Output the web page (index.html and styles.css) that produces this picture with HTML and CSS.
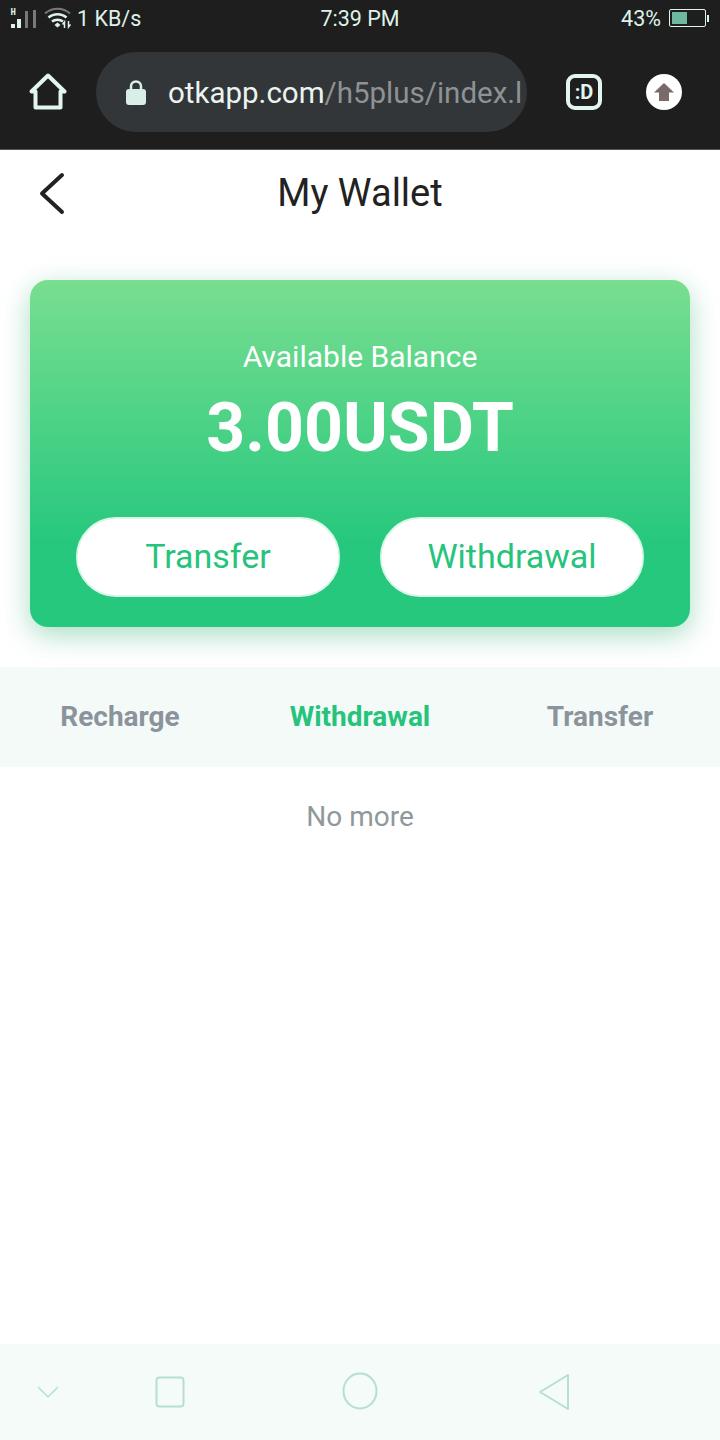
FILE: index.html
```html
<!DOCTYPE html>
<html lang="en">
<head>
  <meta charset="UTF-8">
  <title>My Wallet</title>
  <meta name="viewport" content="width=device-width, initial-scale=1">
  <link rel="stylesheet" href="styles.css">
</head>
<body>
  <div class="chrome">
    <div class="status">
      <div class="status-left">
        <svg class="signal" width="28" height="22" viewBox="0 0 28 22">
          <text x="0.500" y="8" class="signal-h">H</text>
          <rect x="1" y="17" width="4" height="4" fill="#dff2ea"/>
          <rect x="7" y="12" width="4" height="9" fill="#dff2ea"/>
          <rect x="15" y="4" width="3" height="17" fill="#77797a"/>
          <rect x="23" y="3" width="3" height="18" fill="#77797a"/>
        </svg>
        <svg class="wifi" width="28" height="22" viewBox="0 0 28 22" fill="none">
          <path d="M1 6.500C8 0 19 0 26 6.500" stroke="#77797a" stroke-width="2"/>
          <path d="M4.500 10.500C9.500 6 17.500 6 22.500 10.500" stroke="#dff2ea" stroke-width="2.500"/>
          <path d="M8 14.500C11 12 16 12 19 14.500" stroke="#dff2ea" stroke-width="2.500"/>
          <path d="M10.500 18L13.500 15.500L16.500 18L13.500 20.500Z" fill="#dff2ea"/>
          <path d="M20.500 21V15L18.500 17.500M24.500 14V20L26.500 17.500" stroke="#dff2ea" stroke-width="1.500"/>
        </svg>
        <span class="speed">1 KB/s</span>
      </div>
      <span class="clock">7:39 PM</span>
      <div class="status-right">
        <span class="percent">43%</span>
        <div class="battery"><div class="battery-fill"></div></div>
        <div class="battery-tip"></div>
      </div>
    </div>
    <div class="toolbar">
      <svg class="home" width="38" height="38" viewBox="0 0 38 38" fill="none">
        <path d="M2.500 18.500L19 2.500L35.500 18.500H31.500V34.500H6.500V18.500Z" stroke="#e3f5ef" stroke-width="4" stroke-linejoin="round"/>
      </svg>
      <div class="urlbar">
        <svg class="lock" width="20" height="27" viewBox="0 0 20 27">
          <path d="M5 11V7.500C5 4.500 7 2.500 10 2.500S15 4.500 15 7.500V11" fill="none" stroke="#d8efe7" stroke-width="2.500"/>
          <rect x="0" y="10" width="20" height="16" rx="3" fill="#d8efe7"/>
        </svg>
        <div class="url"><span class="url-host">otkapp.com</span><span class="url-path">/h5plus/index.l</span></div>
      </div>
      <div class="smile">:D</div>
      <div class="upload">
        <svg width="22" height="20" viewBox="0 0 22 20">
          <path d="M11 1L21 10.500H16V19H6V10.500H1Z" fill="#7a6a6a"/>
        </svg>
      </div>
    </div>
  </div>

  <div class="titlebar">
    <svg class="back" width="28" height="44" viewBox="0 0 28 44" fill="none">
      <path d="M24 3L4 21.500L24 40" stroke="#222" stroke-width="4" stroke-linecap="round" stroke-linejoin="round"/>
    </svg>
    <h1>My Wallet</h1>
  </div>

  <div class="card">
    <div class="card-label">Available Balance</div>
    <div class="card-amount">3.00USDT</div>
    <div class="card-buttons">
      <button class="pill">Transfer</button>
      <button class="pill">Withdrawal</button>
    </div>
  </div>

  <div class="tabs">
    <div class="tab">Recharge</div>
    <div class="tab active">Withdrawal</div>
    <div class="tab">Transfer</div>
  </div>

  <div class="nomore">No more</div>

  <div class="navbar">
    <svg class="nav-chevron" width="24" height="14" viewBox="0 0 24 14" fill="none">
      <path d="M2 2L12 12L22 2" stroke="#b5e0d4" stroke-width="1.500"/>
    </svg>
    <svg class="nav-square" width="30" height="32" viewBox="0 0 30 32" fill="none">
      <rect x="1.500" y="1.500" width="27" height="29" rx="3" stroke="#b5dfd3" stroke-width="2"/>
    </svg>
    <svg class="nav-circle" width="36" height="38" viewBox="0 0 36 38" fill="none">
      <ellipse cx="18" cy="19" rx="16.500" ry="17.500" stroke="#b5dfd3" stroke-width="2"/>
    </svg>
    <svg class="nav-back" width="32" height="38" viewBox="0 0 32 38" fill="none">
      <path d="M2 19L30 2V36Z" stroke="#b5dfd3" stroke-width="2" stroke-linejoin="round"/>
    </svg>
  </div>
</body>
</html>
```

FILE: styles.css
```css
* {
  box-sizing: border-box;
}
html, body {
  margin: 0;
  padding: 0;
}
body {
  width: 720px;
  height: 1440px;
  display: flex;
  flex-direction: column;
  font-family: Roboto, "Liberation Sans", sans-serif;
  background-color: #fff;
  overflow: hidden;
}

/* browser chrome */
.chrome {
  height: 150px;
  background-color: #1e1e1e;
  border-bottom: 1px solid #555;
  flex-shrink: 0;
}
.status {
  height: 36px;
  position: relative;
  display: flex;
  align-items: center;
  justify-content: space-between;
  padding: 0 10px;
  color: #dff2ea;
  font-size: 21.500px;
}
.status-left {
  display: flex;
  align-items: center;
  gap: 6px;
}
.signal-h {
  font-family: "DejaVu Sans Mono", monospace;
  font-size: 9px;
  font-weight: bold;
  fill: #dff2ea;
}
.speed {
  margin-left: -1px;
}
.clock {
  position: absolute;
  left: 0;
  right: 0;
  text-align: center;
  font-size: 21.500px;
}
.status-right {
  display: flex;
  align-items: center;
}
.percent {
  margin-right: 8px;
  font-size: 21.500px;
}
.battery {
  width: 37px;
  height: 18px;
  border: 1px solid #dff2ea;
  border-radius: 2px;
  padding: 2px;
}
.battery-fill {
  width: 15px;
  height: 100%;
  background-color: #6fb8a0;
}
.battery-tip {
  width: 2px;
  height: 7px;
  margin-left: 1px;
  margin-right: 1px;
  background-color: #dff2ea;
}

.toolbar {
  display: flex;
  align-items: center;
  height: 80px;
  margin-top: 16px;
}
.home {
  margin-left: 29px;
  flex-shrink: 0;
}
.urlbar {
  width: 431px;
  height: 80px;
  margin-left: 29px;
  border-radius: 40px;
  background-color: #333638;
  display: flex;
  align-items: center;
  padding: 0 0 0 30px;
  flex-shrink: 0;
}
.lock {
  flex-shrink: 0;
}
.url {
  margin-left: 22px;
  padding-top: 2px;
  font-size: 29.500px;
  white-space: nowrap;
}
.url-host {
  color: #eaf5f1;
}
.url-path {
  color: #8f9294;
}
.smile {
  width: 36px;
  height: 36px;
  margin-left: 39px;
  border: 4px solid #e3f5ef;
  border-radius: 9px;
  color: #e3f5ef;
  font-family: "Liberation Sans Narrow", Roboto, sans-serif;
  font-size: 20px;
  font-weight: bold;
  display: flex;
  align-items: center;
  justify-content: center;
  flex-shrink: 0;
}
.upload {
  width: 36px;
  height: 36px;
  margin-left: 44px;
  border-radius: 50%;
  background-color: #fff;
  display: flex;
  align-items: center;
  justify-content: center;
  flex-shrink: 0;
}

/* page title */
.titlebar {
  height: 86px;
  display: flex;
  align-items: center;
  justify-content: center;
  position: relative;
  flex-shrink: 0;
}
.titlebar h1 {
  margin: 0;
  font-size: 38px;
  font-weight: 400;
  color: #222;
}
.back {
  position: absolute;
  left: 38px;
  top: 22px;
}

/* balance card */
.card {
  width: 660px;
  height: 347px;
  margin: 44px auto 0;
  border-radius: 18px;
  background: linear-gradient(180deg, #79de90 0%, #26c87e 76%);
  box-shadow: 0 8px 28px rgba(40, 170, 110, 0.4);
  color: #fff;
  display: flex;
  flex-direction: column;
  align-items: center;
  padding-top: 60px;
  flex-shrink: 0;
}
.card-label {
  font-size: 30px;
  line-height: 34px;
}
.card-amount {
  font-size: 68px;
  font-weight: 700;
  line-height: 80px;
  margin-top: 14px;
}
.card-buttons {
  display: flex;
  gap: 40px;
  margin-top: 49px;
}
.pill {
  width: 264px;
  height: 80px;
  border: 2px solid #dcf6e8;
  border-radius: 40px;
  background-color: #fff;
  color: #26c37c;
  font-family: inherit;
  font-size: 34px;
  padding-bottom: 3px;
}

/* tabs */
.tabs {
  height: 100px;
  margin-top: 40px;
  background-color: #f4faf8;
  display: grid;
  grid-template-columns: repeat(3, 240px);
  align-items: center;
  flex-shrink: 0;
}
.tab {
  text-align: center;
  font-size: 28px;
  font-weight: 700;
  color: #8b939c;
  margin-top: -2px;
}
.tab.active {
  color: #26c37c;
}

.nomore {
  margin-top: 33px;
  text-align: center;
  font-size: 28px;
  line-height: 34px;
  color: #8f989b;
  flex-shrink: 0;
}

/* system nav */
.navbar {
  margin-top: auto;
  height: 96px;
  background-color: #f5fbf9;
  position: relative;
  flex-shrink: 0;
}
.navbar svg {
  position: absolute;
}
.nav-chevron {
  left: 36px;
  top: 41px;
}
.nav-square {
  left: 155px;
  top: 32px;
}
.nav-circle {
  left: 342px;
  top: 28px;
}
.nav-back {
  left: 538px;
  top: 29px;
}
```
